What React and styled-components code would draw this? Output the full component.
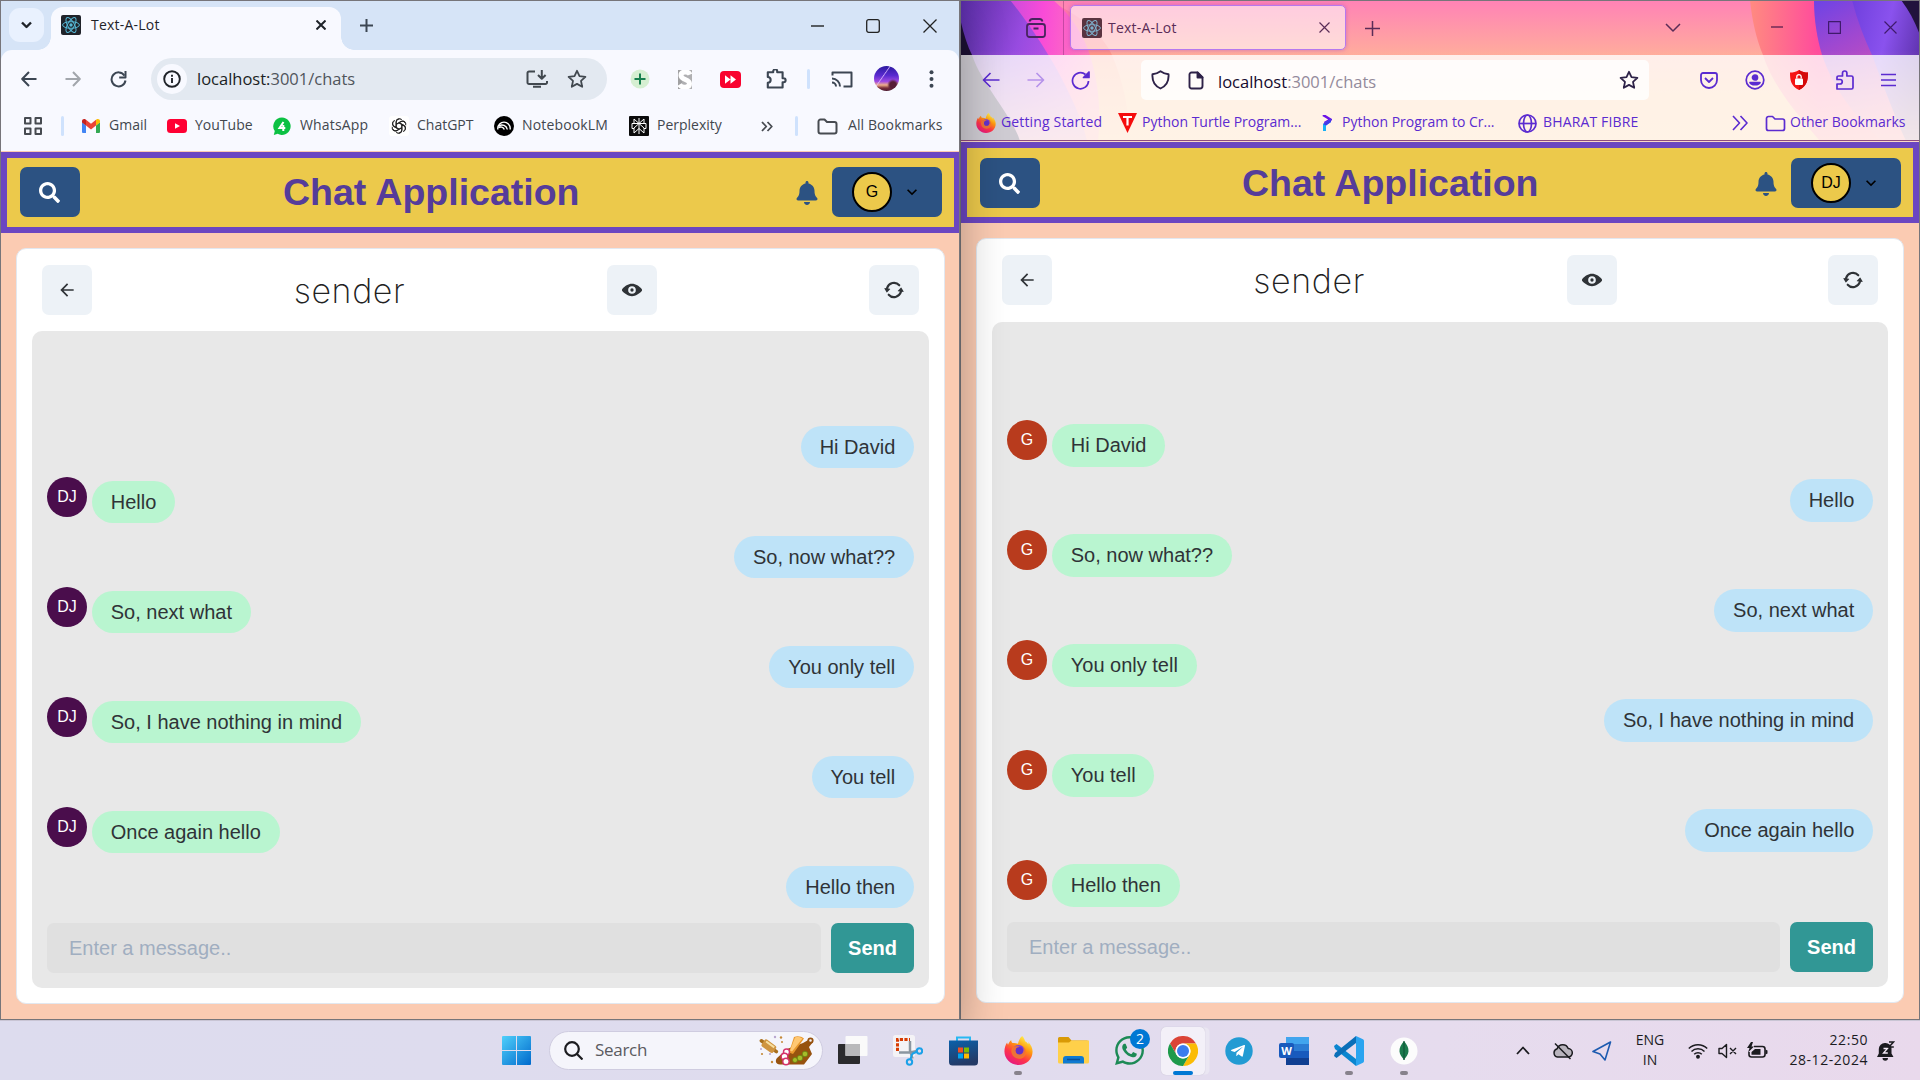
import React from "react";
import styled, { createGlobalStyle, css } from "styled-components";
import { FaSearch, FaBell, FaWhatsapp, FaTelegramPlane } from "react-icons/fa";

const UI = `"Open Sans", "Noto Sans", sans-serif`;
const ARIAL = `"Liberation Sans", Arial, sans-serif`;

const Global = createGlobalStyle`
  * { box-sizing: border-box; }
  html, body { margin: 0; padding: 0; overflow: hidden; }
  svg { display: block; flex: none; }
  button, input { font: inherit; border: 0; margin: 0; padding: 0; background: none; color: inherit; }
`;

/* ---------- shell ---------- */
const Desktop = styled.div`
  width: 1920px;
  height: 1080px;
  display: grid;
  grid-template-columns: 960px 960px;
  grid-template-rows: 1020px 60px;
  overflow: hidden;
  font-family: ${UI};
`;
const WindowFrame = styled.section`
  display: flex;
  flex-direction: column;
  border: 1px solid #77757a;
  overflow: hidden;
  background: #fbcbb2;
  ${(p) => p.$active && css`
    position: relative;
    z-index: 1;
    box-shadow: 0 18px 44px rgba(0, 0, 0, 0.3);
  `}
`;
const Slot = styled.span`
  display: flex;
  align-items: center;
  justify-content: center;
  flex: none;
  width: ${(p) => p.$w}px;
  height: ${(p) => p.$h || 20}px;
  margin-left: ${(p) => p.$ml || 0}px;
`;

/* ---------- chrome browser ---------- */
const ChromeStrip = styled.header`
  display: flex;
  height: 49px;
  background: #d6e4f7;
  padding: 6px 0 0 8px;
`;
const TabSearch = styled.button`
  display: flex;
  align-items: center;
  justify-content: center;
  width: 35px;
  height: 34px;
  margin-top: 1px;
  border-radius: 11px;
  background: #e9f1fe;
`;
const ChromeTab = styled.div`
  position: relative;
  display: flex;
  align-items: center;
  width: 290px;
  height: 43px;
  margin-left: 7px;
  padding: 0 0 7px 10px;
  border-radius: 12px 12px 0 0;
  background: #f8f9ff;
  &::before, &::after {
    content: "";
    position: absolute;
    bottom: 0;
    width: 13px;
    height: 13px;
  }
  &::before { left: -13px; background: radial-gradient(circle at 0 0, transparent 12.5px, #f8f9ff 13px); }
  &::after { right: -13px; background: radial-gradient(circle at 100% 0, transparent 12.5px, #f8f9ff 13px); }
`;
const TabTitle = styled.span`
  flex: none;
  width: ${(p) => p.$w}px;
  margin-left: ${(p) => p.$ml}px;
  font-size: 14px;
  line-height: 20px;
  letter-spacing: 0.22px;
  color: ${(p) => p.$c};
  white-space: nowrap;
`;
const ChromeBars = styled.div`
  height: 101px;
  background: #d6e4f7;
`;
const ChromeSurface = styled.div`
  height: 101px;
  border-radius: 11px 11px 0 0;
  background: #f8f9ff;
  padding-top: 8px;
`;
const Row = styled.div`
  display: flex;
  align-items: center;
  height: ${(p) => p.$h}px;
  margin-top: ${(p) => p.$mt || 0}px;
`;
const Omnibox = styled.div`
  display: flex;
  align-items: center;
  width: 456px;
  height: 42px;
  margin-left: 24px;
  padding-left: 6px;
  border-radius: 21px;
  background: #e3e9f1;
`;
const InfoDot = styled.span`
  display: flex;
  align-items: center;
  justify-content: center;
  width: 30px;
  height: 30px;
  border-radius: 50%;
  background: #f8f9ff;
`;
const Address = styled.span`
  flex: none;
  width: ${(p) => p.$w}px;
  margin-left: ${(p) => p.$ml}px;
  padding-top: ${(p) => p.$pt || 0}px;
  font-size: 16.5px;
  line-height: 24px;
  white-space: nowrap;
  color: ${(p) => p.$dim};
  b { font-weight: 400; color: ${(p) => p.$c}; }
`;
const Divider = styled.span`
  width: 3px;
  height: 20px;
  margin-left: ${(p) => p.$ml}px;
  border-radius: 2px;
  background: #cfe2fd;
`;
const Bookmark = styled.a`
  display: flex;
  align-items: center;
  flex: none;
  width: ${(p) => p.$w}px;
  height: 24px;
  margin-left: ${(p) => p.$ml || 0}px;
  gap: ${(p) => p.$gap || 8}px;
  font-size: 14px;
  line-height: 20px;
  letter-spacing: ${(p) => p.$ls || 0}px;
  white-space: nowrap;
  color: ${(p) => p.$c || "#42474e"};
`;
const BookmarkLabel = styled.span`
  padding-bottom: 2px;
`;
const Avatar25 = styled.span`
  width: 25px;
  height: 25px;
  margin: -2px 0 0 21px;
  border-radius: 50%;
  background:
    radial-gradient(circle at 76% 76%, #571c35 0 12%, transparent 22%),
    linear-gradient(125deg, transparent 36%, rgba(225, 190, 255, 0.8) 38%, transparent 41%),
    linear-gradient(180deg, #2c1aa0 0%, #5a2ad0 38%, #a04be0 62%, #f0b08a 76%, #7a2f3a 88%, #4c1b33 100%);
`;

/* ---------- firefox browser ---------- */
const FoxChrome = styled.header`
  position: relative;
  height: 141px;
  border-bottom: 1px solid #fbd9c8;
  isolation: isolate;
`;
const ThemeArt = styled.svg`
  position: absolute;
  inset: 0;
  z-index: -1;
`;
const FoxTabs = styled.div`
  display: flex;
  height: 54px;
  padding-top: 4px;
`;
const FoxTab = styled.div`
  display: flex;
  align-items: center;
  width: 276px;
  height: 45px;
  margin-left: 6px;
  padding-left: 11px;
  border: 1px solid #b678ee;
  border-radius: 5px;
  background: rgba(255, 255, 255, 0.58);
  box-shadow: 0 0 4px rgba(150, 60, 200, 0.45);
`;
const FoxRule = styled.span`
  width: 1px;
  height: 54px;
  margin: -4px 0 0 17px;
  background: rgba(60, 10, 70, 0.28);
`;
const FoxBars = styled.div`
  height: 86px;
  padding-top: 5px;
  background: rgba(255, 255, 255, 0.79);
  border-bottom: 1px solid #8d4a80;
`;
const UrlBar = styled.div`
  display: flex;
  align-items: center;
  width: 508px;
  height: 40px;
  margin-left: 51px;
  padding-left: 10px;
  border-radius: 5px;
  background: rgba(255, 255, 255, 0.8);
`;

/* ---------- chat page ---------- */
const Page = styled.main`
  flex: 1;
  display: flex;
  flex-direction: column;
  background: #fbcbb2;
  padding-top: ${(p) => p.$pt || 0}px;
  font-family: ${ARIAL};
`;
const NavBar = styled.nav`
  display: flex;
  align-items: flex-start;
  flex: none;
  height: 81px;
  padding: ${(p) => p.$pt}px 12px 0 13px;
  border: 6px solid #6b46c1;
  border-right-width: ${(p) => p.$br}px;
  background: #ecc94b;
`;
const SolidButton = styled.button`
  display: flex;
  align-items: center;
  justify-content: ${(p) => (p.$start ? "flex-start" : "center")};
  flex: none;
  width: ${(p) => p.$w}px;
  height: 50px;
  padding-left: ${(p) => p.$pl || 0}px;
  padding-right: ${(p) => p.$pr || 0}px;
  border-radius: 7px;
  color: #fff;
  background: #2c5282;
`;
const AppTitle = styled.h1`
  flex: 1;
  margin: 0;
  padding-left: ${(p) => p.$pl}px;
  font-size: 37.5px;
  line-height: 50px;
  font-weight: 700;
  white-space: nowrap;
  color: #553c9a;
`;
const BellWrap = styled.span`
  display: flex;
  align-items: center;
  height: 51px;
  margin-right: 13px;
  color: #2c5282;
`;
const Initials = styled.span`
  display: flex;
  align-items: center;
  justify-content: center;
  flex: none;
  width: 40px;
  height: 40px;
  border-radius: 50%;
  font-size: 16px;
  line-height: 20px;
  color: ${(p) => p.$c || "#fff"};
  background: ${(p) => p.$bg};
  border: ${(p) => (p.$ring ? "2px solid #000" : "0")};
`;
const Card = styled.div`
  display: flex;
  flex-direction: column;
  flex: none;
  width: ${(p) => p.$w}px;
  height: ${(p) => p.$h}px;
  margin: 15px 0 0 15px;
  padding: 0 15px 15px;
  border: 1px solid #e2e8f0;
  border-radius: 10px;
  background: #fff;
`;
const CardHeader = styled.div`
  display: flex;
  align-items: center;
  justify-content: space-between;
  height: ${(p) => p.$h}px;
  padding: 0 10px ${(p) => p.$pb}px 10px;
`;
const IconButton = styled.button`
  display: flex;
  align-items: center;
  justify-content: center;
  width: 50px;
  height: 50px;
  margin-left: ${(p) => p.$ml || 0}px;
  border-radius: 7px;
  color: #2f3337;
  background: #edf2f7;
`;
const ChatName = styled.h2`
  margin: 0;
  width: 112px;
  font-family: Inter, "Open Sans", sans-serif;
  font-size: 34px;
  line-height: 45px;
  font-weight: 250;
  letter-spacing: 0.6px;
  white-space: nowrap;
  color: #222;
`;
const ChatBox = styled.div`
  display: flex;
  flex: 1;
  flex-direction: column;
  justify-content: flex-end;
  padding: 15px;
  border-radius: 10px;
  background: #e8e8e8;
`;
const Messages = styled.div`
  display: flex;
  flex-direction: column;
  gap: ${(p) => 55 - p.$row}px;
`;
const MessageRow = styled.div`
  display: flex;
  align-items: flex-start;
  justify-content: ${(p) => (p.$mine ? "flex-end" : "flex-start")};
  gap: 5px;
  height: ${(p) => p.$row}px;
  ${Initials} { margin-top: -4px; }
`;
const Bubble = styled.span`
  padding: 0 18.75px;
  height: ${(p) => p.$row}px;
  border-radius: 25px;
  font-size: 20px;
  line-height: ${(p) => p.$row}px;
  white-space: nowrap;
  color: #2f3337;
  background: ${(p) => (p.$mine ? "#bee3f8" : "#b9f5d0")};
`;
const Composer = styled.div`
  display: flex;
  gap: 10px;
  margin-top: 15px;
`;
const MessageInput = styled.input`
  flex: 1;
  min-width: 0;
  height: 50px;
  padding: 0 22px;
  border-radius: 7px;
  font-size: 20px;
  background: #e0e0e0;
  &::placeholder { color: #a0aec0; opacity: 1; }
`;
const SendButton = styled.button`
  width: 83px;
  height: 50px;
  border-radius: 7px;
  font-size: 20px;
  font-weight: 700;
  color: #fff;
  background: #319795;
`;

/* ---------- taskbar ---------- */
const Taskbar = styled.footer`
  grid-column: 1 / 3;
  position: relative;
  z-index: 2;
  display: flex;
  align-items: center;
  padding-left: 502px;
  border-top: 1px solid #c9c5d4;
  background: linear-gradient(90deg, #dddcee 0%, #dfdcee 45%, #e6dcee 75%, #e9d9ec 100%);
`;
const TaskSearch = styled.div`
  display: flex;
  align-items: center;
  width: 274px;
  height: 39px;
  margin-left: 18px;
  padding-left: 14px;
  border: 1px solid #cfcce0;
  border-radius: 20px;
  background: #f5f5fb;
  font-size: 17px;
  color: #5a5a60;
`;
const SearchLabel = styled.span`
  width: 164px;
  margin: -2px 0 0 12px;
  letter-spacing: -0.3px;
`;
const TaskItem = styled.div`
  position: relative;
  display: flex;
  align-items: center;
  justify-content: center;
  width: 44px;
  height: 48px;
  margin-left: ${(p) => p.$ml ?? 11}px;
  border-radius: 5px;
  ${(p) => p.$on && css`
    background: #f3f0f8;
    box-shadow: 0 0 1px #b9b4c6, 5px 0 0 -0.5px #eae6f2;
  `}
`;
const Running = styled.span`
  position: absolute;
  bottom: 0;
  left: ${(p) => (p.$on ? 12 : 18)}px;
  width: ${(p) => (p.$on ? 20 : 8)}px;
  height: 4px;
  border-radius: 2px;
  background: ${(p) => (p.$on ? "#0078d4" : "#87828c")};
`;
const Badge = styled.span`
  position: absolute;
  top: 2px;
  right: 1px;
  width: 20px;
  height: 20px;
  border-radius: 50%;
  font-size: 14px;
  line-height: 20px;
  text-align: center;
  color: #fff;
  background: #0078d4;
`;
const TrayText = styled.div`
  width: ${(p) => p.$w}px;
  margin-left: ${(p) => p.$ml}px;
  margin-top: -2px;
  font-size: 14px;
  line-height: 20px;
  letter-spacing: ${(p) => p.$ls || 0}px;
  text-align: ${(p) => p.$align};
  white-space: nowrap;
  color: #1b1b1f;
`;

/* ---------- icons ---------- */
const Line = ({ w = 20, h, vb, c = "#3c4653", s = 2, children, cap = "butt" }) => (
  <svg width={w} height={h || w} viewBox={vb || `0 0 ${w} ${h || w}`} fill="none" stroke={c} strokeWidth={s} strokeLinecap={cap} strokeLinejoin="round">
    {children}
  </svg>
);
const ReactMark = ({ bg = "#20232a", c = "#56b8d6" }) => (
  <svg width="20" height="20" viewBox="0 0 20 20">
    <rect width="20" height="20" rx="2" fill={bg} />
    <g fill="none" stroke={c} strokeWidth="1">
      {[0, 60, 120].map((a) => <ellipse key={a} cx="10" cy="10" rx="8.4" ry="3.3" transform={`rotate(${a} 10 10)`} />)}
    </g>
    <circle cx="10" cy="10" r="1.7" fill={c} />
  </svg>
);
const Gmail = () => (
  <svg width="18" height="14" viewBox="0 0 18 14">
    <path d="M0 2v10.7c0 .7.5 1.3 1.2 1.3H4V6.5L0 3z" fill="#4285f4" />
    <path d="M18 2v10.7c0 .7-.5 1.3-1.2 1.3H14V6.5L18 3z" fill="#34a853" />
    <path d="M4 .8v5.7l5 3.9 5-3.9V.8L9 4.7z" fill="#ea4335" />
    <path d="M0 2v1.400l4 3.100V.8L3.200.3C1.800-.5 0 .5 0 2z" fill="#c5221f" />
    <path d="M18 2v1.400l-4 3.100V.8l.8-.5C16.200-.5 18 .5 18 2z" fill="#fbbc04" />
  </svg>
);
const YouTube = () => (
  <svg width="20" height="14" viewBox="0 0 20 14"><rect width="20" height="14" rx="3.500" fill="#ff0033" /><path d="M8 4.200v5.600L13 7z" fill="#fff" /></svg>
);
const WaFour = () => (
  <svg width="18" height="19" viewBox="0 0 18 19">
    <path d="M9 .5a8.700 8.700 0 1 1-4.300 16.300L.8 17.900l1-3.800A8.700 8.700 0 0 1 9 .5z" fill="#0cc143" />
    <path d="M10.500 5L6.500 11h5.800M10.300 8v6" fill="none" stroke="#fff" strokeWidth="2" />
  </svg>
);
const OpenAi = () => (
  <svg width="20" height="20" viewBox="-12 -12 24 24">
    <rect x="-12" y="-12" width="24" height="24" rx="4" fill="#fff" />
    <g fill="none" stroke="#222" strokeWidth="1.250">
      {[0, 60, 120, 180, 240, 300].map((a) => <path key={a} transform={`rotate(${a})`} d="M-3.400 1.900V-4.800a3.800 3.800 0 0 1 6.600-2.600M-3.400-2L2.300-5.300a3.800 3.800 0 0 1 5.200 1.400" />)}
    </g>
  </svg>
);
const Notebook = () => (
  <svg width="20" height="20" viewBox="0 0 20 20">
    <circle cx="10" cy="10" r="10" fill="#000" />
    <g fill="none" stroke="#fff" strokeWidth="1.400">
      <path d="M3.800 13.500v-1.200a6.200 6.200 0 0 1 12.400 0v1.200" />
      <path d="M5 9.800a5.500 5.500 0 0 1 8.300 3.700M4.500 11.700a3.800 3.800 0 0 1 5.800 1.800" />
    </g>
  </svg>
);
const Perplexity = () => (
  <svg width="20" height="20" viewBox="0 0 20 20">
    <rect width="20" height="20" rx="1" fill="#0b0b0b" />
    <g fill="none" stroke="#fff" strokeWidth="1">
      <path d="M10 2v16M5 3l5 4.500L15 3v4.500H5zM10 7.500L5 12v5l5-4.500 5 4.500v-5zM5 12.500H3v-5h14v5h-2" />
    </g>
  </svg>
);
const Folder = ({ c, s = 2 }) => <Line w={21} h={17} c={c} s={s}><path d="M1.500 3.500a2 2 0 0 1 2-2h4l2.500 2.500h7.500a2 2 0 0 1 2 2v7.500a2 2 0 0 1-2 2h-14a2 2 0 0 1-2-2z" /></Line>;
const Cross = ({ w = 13, c, s = 1.200 }) => <Line w={w} c={c} s={s}><path d={`M.5.5l${w - 1} ${w - 1}M${w - 0.5}.5l-${w - 1} ${w - 1}`} /></Line>;
const Plus = ({ w = 14, c, s = 2 }) => <Line w={w} c={c} s={s}><path d={`M${w / 2} 0v${w}M0 ${w / 2}h${w}`} /></Line>;
const Star = ({ c, w = 20, s = 1.800 }) => <Line w={w} vb="0 0 20 20" c={c} s={s}><path d="M10 1.800l2.500 5.400 5.900.7-4.400 4 1.200 5.900-5.200-2.900-5.200 2.900L6 11.900l-4.400-4 5.900-.7z" /></Line>;

const FirefoxLogo = ({ w = 20, id }) => (
  <svg width={w} height={w} viewBox="0 0 28 28">
    <defs>
      <linearGradient id={id} x1=".8" y1=".05" x2=".25" y2="1">
        <stop offset="0" stopColor="#fff44f" /><stop offset=".35" stopColor="#ff980e" /><stop offset=".65" stopColor="#ff3647" /><stop offset="1" stopColor="#e31587" />
      </linearGradient>
    </defs>
    <path d="M17.500 0c1.800 1.700 2.500 3.400 2.800 5 1.200.5 2.500 1.700 3.200 3 .2-.9.100-1.500 0-2.200 2.500 2.700 4.100 6 4.100 9.200C27.600 22.500 21.500 28 14 28S.4 22.300.4 14.800c0-3.300 1.100-6.500 2.600-8.600.2 1 .4 1.700.9 2.200C4.500 6.500 5.500 5 7 4c.1 1.300.4 2.200 1.200 2.800 1.800-.2 3.800 0 5.300.8.700-3 1.800-5.700 4-7.600z" fill={`url(#${id})`} />
    <circle cx="14.200" cy="15" r="6.300" fill="#7a3be0" />
    <path d="M8 11.500c1.500-1.700 4-2 6-1.500 1.300.4 1.600 1.300.5 2.100-1.300.8-2.700.8-3 2-.3 2 2 3.700 4.300 3.200 3.500-.7 4-4.500 2.200-7.300 4 2 4.500 7.500 1 10.500-4 3.200-10 1-11.500-3.500-.7-2-.5-4 .5-5.500z" fill="#ff7b1c" opacity=".85" />
    <circle cx="14.800" cy="14.200" r="3.600" fill="#6331c9" />
  </svg>
);
const ChromeLogo = () => (
  <svg width="30" height="30" viewBox="-45 -45 90 90">
    {[["#db4437", 0], ["#fbbc05", 120], ["#1e9a4b", 240]].map(([c, a]) => (
      <path key={a} fill={c} transform={`rotate(${a})`} d="M0-22.500H39A45 45 0 0 0-39-22.500L-19.500 11.250A22.500 22.500 0 0 1 0-22.500z" />
    ))}
    <circle r="22.500" fill="#fff" /><circle r="18" fill="#3b7ded" />
  </svg>
);
const WinLogo = () => (
  <svg width="29" height="29" viewBox="0 0 29 29">
    <defs><linearGradient id="win" x1="0" y1="0" x2="1" y2="1"><stop offset="0" stopColor="#4fd0fb" /><stop offset="1" stopColor="#0069cc" /></linearGradient></defs>
    <path fill="url(#win)" d="M1 0h13v14H0V1a1 1 0 0 1 1-1zM15 0h13a1 1 0 0 1 1 1v13H15zM0 15h14v14H1a1 1 0 0 1-1-1zM15 15h14v13a1 1 0 0 1-1 1H15z" />
  </svg>
);
const Feast = () => (
  <svg width="56" height="31" viewBox="0 0 56 31">
    <g transform="rotate(36 10 11)"><rect x="-1" y="9.500" width="22" height="3.500" rx="1.700" fill="#a8701e" /><rect x="3" y="7" width="14" height="8.500" rx="2" fill="#cf9440" /><path d="M5 9h10" stroke="#f7dfa0" strokeWidth="2" /></g>
    <path d="M44 8l7-4 3 3-4 5 3 7-8 10.500H21c-4.500 0-5-4-3-6.500l10-9z" fill="#97530f" />
    <circle cx="51.500" cy="5.500" r="2.200" fill="#f5f5fb" stroke="#97530f" strokeWidth="1.800" />
    <path d="M35 2c4-1.500 7-.5 10 1.500L34 19l-4-1.500z" fill="#e9982c" /><path d="M36 2.500c3.500-1 5.500 0 7.500 1L33 16.500l-2-1z" fill="#ffc873" />
    <g fill="#fff" stroke="#d6336c" strokeWidth="1.400"><circle cx="27.500" cy="17" r="3" /><circle cx="25.500" cy="21.500" r="3.300" /><circle cx="27" cy="26.500" r="3.200" /></g>
    <g fill="#a5bd2a" stroke="#6a7d10" strokeWidth=".8"><circle cx="36" cy="25" r="2.500" /><circle cx="41" cy="23" r="2.800" /><circle cx="46" cy="19" r="2.800" /></g>
    <g fill="#c58a3a"><circle cx="22" cy="2.500" r="1.200" /><circle cx="23" cy="7" r="1" /><circle cx="3" cy="19" r="1.100" /><circle cx="13" cy="27" r="1.200" /></g>
    <g fill="#b9a6cf"><circle cx="16" cy="2" r="1.200" /><circle cx="2" cy="14" r="1" /><circle cx="11" cy="19" r="1.100" /></g>
  </svg>
);
const TaskView = () => (
  <svg width="30" height="29" viewBox="0 0 30 29"><rect x="0" y="8" width="22" height="20" rx="1" fill="#2b2b2d" /><rect x="7.500" width="22" height="20" rx="1" fill="#fafafa" /><path d="M7.500 8H22v12H7.500z" fill="#b9b9bb" /></svg>
);
const Snip = () => (
  <svg width="30" height="31" viewBox="0 0 30 31">
    <rect width="22" height="22" rx="2.500" fill="#f4f3f6" />
    <path d="M4.500 16V4.500H17" fill="none" stroke="#d83b01" strokeWidth="3" strokeDasharray="3.200 1.400" />
    <path d="M17 6v9.500l2.500 8M6 17.500h11l7-1.500" fill="none" stroke="#8b96a0" strokeWidth="2.500" />
    <g fill="none" stroke="#1ba1e8" strokeWidth="2"><circle cx="26.500" cy="16" r="2.700" /><circle cx="16.500" cy="27" r="2.700" /><path d="M19 19l5-2.500M17.500 24.500L19 19" /></g>
  </svg>
);
const Store = () => (
  <svg width="29" height="30" viewBox="0 0 29 30">
    <path d="M8 6V1.500h13V6" fill="none" stroke="#28b8f2" strokeWidth="2" />
    <defs><linearGradient id="st" x1="0" y1="0" x2=".3" y2="1"><stop offset="0" stopColor="#0a61ab" /><stop offset="1" stopColor="#243a66" /></linearGradient></defs>
    <path d="M0 4.500h29V26a3.500 3.500 0 0 1-3.500 3.500h-22A3.500 3.500 0 0 1 0 26z" fill="url(#st)" />
    <path fill="#f25022" d="M9 11.500h5v5H9z" /><path fill="#7fba00" d="M15 11.500h5v5h-5z" /><path fill="#00a4ef" d="M9 17.500h5v5H9z" /><path fill="#ffb900" d="M15 17.500h5v5h-5z" />
  </svg>
);
const Explorer = () => (
  <svg width="31" height="27" viewBox="0 0 31 27">
    <path d="M1.500 0h9l3 3.500H29a1.500 1.500 0 0 1 1.500 1.500v6H0V1.500A1.500 1.500 0 0 1 1.500 0z" fill="#d99a06" />
    <path d="M0 5.500h11l2.500-2H31V25a1.500 1.500 0 0 1-1.500 1.500h-28A1.500 1.500 0 0 1 0 25z" fill="#ffd04a" />
    <path d="M5 26.500V22a3 3 0 0 1 3-3h15a3 3 0 0 1 3 3v4.500z" fill="#0f7ad1" /><path d="M9 22.500h13" stroke="#0a4f96" strokeWidth="1.500" />
  </svg>
);
const Telegram = () => (
  <svg width="28" height="28" viewBox="0 0 28 28"><circle cx="14" cy="14" r="13.700" fill="#229bd3" /><FaTelegramPlane x="5" y="6" size={16} color="#fff" /></svg>
);
const WordMark = styled.span`
  position: relative;
  display: flex;
  flex-direction: column;
  width: 30px;
  height: 28px;
  padding-left: 7px;
`;
const WordBand = styled.i`
  flex: 1;
  background: ${(p) => p.$c};
`;
const WordLetter = styled.b`
  position: absolute;
  left: 0;
  top: 6px;
  width: 15px;
  height: 15px;
  border-radius: 2px;
  background: #185abd;
  color: #fff;
  font: 700 11px/15px "Open Sans", sans-serif;
  text-align: center;
`;
const VsCode = () => (
  <svg width="30" height="30" viewBox="0 0 30 30">
    <path d="M0 10l2.500-2L22 23v7L1 13z" fill="#0b86d0" /><path d="M0 20l2.500 2L22 7V0L1 17z" fill="#0a6fb8" />
    <path d="M22 0l7 3.200a2 2 0 0 1 1 1.700v20.200a2 2 0 0 1-1 1.700L22 30z" fill="#2aa4f0" />
  </svg>
);
const Mongo = () => (
  <svg width="28" height="28" viewBox="0 0 28 28"><circle cx="14" cy="14" r="13.500" fill="#fcfcfc" /><path d="M14 4c3 4 4.800 6.500 4.500 10.500-.3 3.500-2.500 5.500-4 7.500v1h-1v-1c-1.500-2-3.800-4-4-7.500C9.200 10.500 11 8 14 4z" fill="#1b7a4d" /><path d="M14 4v19" stroke="#0c4f34" /></svg>
);

/* ---------- chat client ---------- */
const ViewIcon = () => (
  <svg width="20" height="20" viewBox="0 0 24 24" fill="currentColor">
    <path d="M23.432,10.524C20.787,7.614,16.4,4.538,12,4.6,7.6,4.537,3.213,7.615.568,10.524a2.211,2.211,0,0,0,0,2.948C3.182,16.351,7.507,19.4,11.839,19.4h.308c4.347,0,8.671-3.049,11.288-5.929A2.21,2.21,0,0,0,23.432,10.524ZM7.4,12A4.6,4.6,0,1,1,12,16.6,4.6,4.6,0,0,1,7.4,12Z" />
    <circle cx="12" cy="12" r="2" />
  </svg>
);
const RepeatIcon = () => (
  <svg width="20" height="20" viewBox="0 0 24 24" fill="currentColor">
    <path d="M10.319,4.936a7.239,7.239,0,0,1,7.1,2.252,1.25,1.25,0,1,0,1.872-1.657A9.737,9.737,0,0,0,9.743,2.5,10.269,10.269,0,0,0,2.378,9.61a.249.249,0,0,1-.271.178l-1.033-.13A.491.491,0,0,0,.6,9.877a.5.5,0,0,0-.019.526l2.476,4.342a.5.5,0,0,0,.373.248.43.43,0,0,0,.062,0,.5.5,0,0,0,.359-.152l3.477-3.593a.5.5,0,0,0-.3-.844L5.15,10.172a.25.25,0,0,1-.2-.333A7.7,7.7,0,0,1,10.319,4.936Z" />
    <path d="M23.406,14.1a.5.5,0,0,0,.015-.526l-2.5-4.329A.5.5,0,0,0,20.546,9a.489.489,0,0,0-.421.151l-3.456,3.614a.5.5,0,0,0,.3.842l1.848.221a.249.249,0,0,1,.183.117.253.253,0,0,1,.023.216,7.688,7.688,0,0,1-5.369,4.9,7.243,7.243,0,0,1-7.1-2.253,1.25,1.25,0,1,0-1.872,1.656,9.74,9.74,0,0,0,9.549,3.03,10.261,10.261,0,0,0,7.369-7.12.251.251,0,0,1,.27-.179l1.058.127a.422.422,0,0,0,.06,0A.5.5,0,0,0,23.406,14.1Z" />
  </svg>
);
const CONVERSATION = [
  ["G", "Hi David"], ["DJ", "Hello"], ["G", "So, now what??"], ["DJ", "So, next what"], ["G", "You only tell"],
  ["DJ", "So, I have nothing in mind"], ["G", "You tell"], ["DJ", "Once again hello"], ["G", "Hello then"],
];
function ChatApp({ me, peerColor, layout }) {
  return (
    <Page $pt={layout.top}>
      <NavBar $pt={layout.navPad} $br={layout.navRight}>
        <SolidButton $w={60} $pr={1}><FaSearch size={21} /></SolidButton>
        <AppTitle $pl={layout.titlePl}>Chat Application</AppTitle>
        <BellWrap><FaBell size={24} /></BellWrap>
        <SolidButton $w={110} $start $pl={20}>
          <Initials $bg="#ecc94b" $c="#000" $ring>{me}</Initials>
          <Slot $w={20} $ml={10}><svg width="20" height="20" viewBox="0 0 24 24"><path d="M16.590 8.590L12 13.170 7.410 8.590 6 10l6 6 6-6z" fill="#000" /></svg></Slot>
        </SolidButton>
      </NavBar>
      <Card $w={layout.cardW} $h={layout.cardH}>
        <CardHeader $h={layout.headH} $pb={layout.headPb}>
          <IconButton><svg width="20" height="20" viewBox="0 0 24 24"><path d="M20 11H7.830l5.590-5.590L12 4l-8 8 8 8 1.410-1.410L7.830 13H20v-2z" fill="currentColor" /></svg></IconButton>
          <ChatName>sender</ChatName>
          <IconButton><ViewIcon /></IconButton>
          <IconButton $ml={10}><RepeatIcon /></IconButton>
        </CardHeader>
        <ChatBox>
          <Messages $row={layout.row}>
            {CONVERSATION.map(([who, text]) => (
              <MessageRow key={text} $mine={who === me} $row={layout.row}>
                {who !== me && <Initials $bg={peerColor}>{who}</Initials>}
                <Bubble $mine={who === me} $row={layout.row}>{text}</Bubble>
              </MessageRow>
            ))}
          </Messages>
          <Composer>
            <MessageInput placeholder="Enter a message.." />
            <SendButton>Send</SendButton>
          </Composer>
        </ChatBox>
      </Card>
    </Page>
  );
}

/* ---------- windows ---------- */
function ChromeWindow() {
  return (
    <WindowFrame $active>
      <ChromeStrip>
        <TabSearch><Line w={11} h={8} s={2.400} c="#1f2329"><path d="M1 1.500l4.500 4.500L10 1.500" /></Line></TabSearch>
        <ChromeTab>
          <ReactMark />
          <TabTitle $ml={10} $w={225} $c="#1f2329">Text-A-Lot</TabTitle>
          <Cross w={10} s={2} c="#1f2329" />
        </ChromeTab>
        <Slot $w={14} $h={36} $ml={18}><Plus w={13} /></Slot>
        <Slot $w={14} $h={38} $ml={438}><Line w={14} h={2} s={1.300} c="#111"><path d="M0 1h13" /></Line></Slot>
        <Slot $w={14} $h={38} $ml={41}><Line w={14} s={1.300} c="#222"><rect x=".7" y=".7" width="12.600" height="12.600" rx="2" /></Line></Slot>
        <Slot $w={14} $h={38} $ml={43}><Cross w={14} c="#222" s={1.300} /></Slot>
      </ChromeStrip>
      <ChromeBars>
        <ChromeSurface>
          <Row $h={42}>
            <Slot $w={16} $ml={20}><Line w={16} ><path d="M15.500 8H1.500M8 1L1.200 8 8 15" /></Line></Slot>
            <Slot $w={16} $ml={28}><Line w={16} c="#a2a6ac"><path d="M.5 8h14M8 1l6.800 7L8 15" /></Line></Slot>
            <Slot $w={17} $ml={29}><Line w={17} h={17}><path d="M14.500 4.600A7 7 0 1 0 15.500 9.500" /><path d="M15.500 0v6.500H9.200" /></Line></Slot>
            <Omnibox>
              <InfoDot><Line w={18} s={1.900} c="#1f2329"><circle cx="9" cy="9" r="7.800" /><path d="M9 8v5M9 4.800v2" /></Line></InfoDot>
              <Address $ml={10} $w={329} $c="#1b1f24" $dim="#50555c"><b>localhost:</b>3001/chats</Address>
              <Line w={22} h={18} c="#41484f"><path d="M9 1.500H3a1.500 1.500 0 0 0-1.500 1.500v9.500A1.500 1.500 0 0 0 3 14h16.500a1.500 1.500 0 0 0 1.500-1.500V11M15.800 0v8M12 5l3.800 3.800L19.600 5M7 16.800h8" /></Line>
              <Slot $w={20} $ml={19}><Star c="#41484f" /></Slot>
            </Omnibox>
            <Slot $w={20} $ml={23}><svg width="20" height="20" viewBox="0 0 20 20"><circle cx="10" cy="10" r="9.500" fill="#d5efd2" /><path d="M10 4.500v11M4.500 10h11" stroke="#17804f" strokeWidth="2" /></svg></Slot>
            <Slot $w={14} $ml={28}><svg width="14" height="19" viewBox="0 0 14 19"><path d="M0 0h4v19H0z" fill="#a0a0a2" /><path d="M4 0h10v19H4z" fill="#b0b0b2" /><path d="M12 4.500C10.500 1 3 1 3 5.500s8.500 3.500 8.500 8-7.500 5-10 1" fill="none" stroke="#fff" strokeWidth="5" /></svg></Slot>
            <Slot $w={21} $ml={28}><svg width="21" height="17" viewBox="0 0 21 17"><rect width="21" height="17" rx="4" fill="#f9032f" /><path d="M5 4.200v8.600l5.500-4.300zM10.500 4.200v8.600L16 8.500z" fill="#fff" /></svg></Slot>
            <Slot $w={21} $ml={25}><Line w={21} h={20} s={2.100}><path d="M1.800 3.300h5.400v-1a2 2 0 0 1 4 0v1h5.400v6h1a2 2 0 0 1 0 4h-1v5.200H1.800v-4.700c3.800-.3 3.800-5.500 0-5.800z" /></Line></Slot>
            <Divider $ml={20} />
            <Slot $w={22} $ml={21}><Line w={22} h={17}><path d="M1.500 4.500v-3h19V15.500h-8M1 7.500a8 8 0 0 1 8 8M1 11.500a4 4 0 0 1 4 4" /></Line></Slot>
            <Avatar25 />
            <Slot $w={5} $ml={30}><svg width="5" height="18" viewBox="0 0 5 18" fill="#3c4653"><circle cx="2.500" cy="2.200" r="2" /><circle cx="2.500" cy="9" r="2" /><circle cx="2.500" cy="15.800" r="2" /></svg></Slot>
          </Row>
          <Row $h={24} $mt={14}>
            <Slot $w={18} $ml={23}><Line w={18} c="#474b51"><path d="M1 1h5.500v5.500H1zM11.500 1H17v5.500h-5.500zM1 11.500h5.500V17H1zM11.500 11.500H17V17h-5.500z" /></Line></Slot>
            <Divider $ml={19} />
            <Bookmark $w={85} $ml={18} $gap={9}><Gmail /><BookmarkLabel>Gmail</BookmarkLabel></Bookmark>
            <Bookmark $w={106}><YouTube /><BookmarkLabel>YouTube</BookmarkLabel></Bookmark>
            <Bookmark $w={116} $gap={9} $ls={0.15}><WaFour /><BookmarkLabel>WhatsApp</BookmarkLabel></Bookmark>
            <Bookmark $w={105}><OpenAi /><BookmarkLabel>ChatGPT</BookmarkLabel></Bookmark>
            <Bookmark $w={135} $ls={0.15}><Notebook /><BookmarkLabel>NotebookLM</BookmarkLabel></Bookmark>
            <Bookmark $w={132}><Perplexity /><BookmarkLabel>Perplexity</BookmarkLabel></Bookmark>
            <Line w={12} h={11} c="#474b51" s={1.800}><path d="M1 1l4.300 4.500L1 10M6.500 1l4.300 4.500L6.500 10" /></Line>
            <Divider $ml={22} />
            <Bookmark $w={130} $ml={19} $gap={10} $ls={0.1}><Folder c="#474b51" /><BookmarkLabel>All Bookmarks</BookmarkLabel></Bookmark>
          </Row>
        </ChromeSurface>
      </ChromeBars>
      <ChatApp me="G" peerColor="#4a0d4c" layout={{ top: 1, navPad: 9, navRight: 5, titlePl: 203, cardW: 929, cardH: 756, headH: 82, headPb: 0, row: 42 }} />
    </WindowFrame>
  );
}

const V = "#5b2bd0";
const N = "#2e2248";
function FirefoxWindow() {
  return (
    <WindowFrame>
      <FoxChrome>
        <ThemeArt width="958" height="140" viewBox="1 1 958 140" preserveAspectRatio="none">
          <defs>
            <linearGradient id="sky" x1="0" y1="0" x2="0" y2="1"><stop offset="0" stopColor="#ff82b6" /><stop offset=".38" stopColor="#ffab9d" /><stop offset=".7" stopColor="#ffc08a" /><stop offset="1" stopColor="#ffc488" /></linearGradient>
            <linearGradient id="lp" x1="0" y1="0" x2="1" y2=".4"><stop offset="0" stopColor="#4a2494" /><stop offset=".5" stopColor="#864be2" /><stop offset="1" stopColor="#b65cf0" /></linearGradient>
            <linearGradient id="lm" x1="0" y1="0" x2="1" y2=".1"><stop offset="0" stopColor="#8a4ce0" /><stop offset=".6" stopColor="#f94bd8" /><stop offset="1" stopColor="#ff7fb4" /></linearGradient>
            <linearGradient id="lo" x1="0" y1="0" x2="0" y2="1"><stop offset="0" stopColor="#ff6fb0" /><stop offset=".45" stopColor="#ff9c80" /><stop offset="1" stopColor="#ffba88" /></linearGradient>
            <linearGradient id="ro" x1="0" y1="0" x2="1" y2="0"><stop offset="0" stopColor="#ff8b80" /><stop offset=".4" stopColor="#ff4b9c" /><stop offset="1" stopColor="#ff5aa0" /></linearGradient>
            <linearGradient id="rp" x1="0" y1="0" x2=".4" y2="1"><stop offset="0" stopColor="#6c43e6" /><stop offset=".35" stopColor="#a048d0" /><stop offset="1" stopColor="#f05aa8" /></linearGradient>
            <linearGradient id="rq" x1="0" y1="0" x2="1" y2=".5"><stop offset="0" stopColor="#6f3fdd" /><stop offset=".5" stopColor="#8a52ee" /><stop offset="1" stopColor="#5b30a8" /></linearGradient>
            <linearGradient id="glow" x1="0" y1="0" x2="0" y2="1"><stop offset="0" stopColor="#ffc488" stopOpacity="0" /><stop offset="1" stopColor="#ffc488" stopOpacity=".6" /></linearGradient>
          </defs>
          <path d="M0 0h960v141H0z" fill="url(#sky)" />
          <path d="M85 0C125 15 145 40 152 55c12 28 18 60 17 86H80z" fill="url(#lo)" />
          <path d="M0 0h93c18 14 32 38 37 55 9 30 11 56 8 86H0z" fill="url(#lm)" />
          <path d="M0 0h50c18 22 40 55 55 85 10 20 18 38 22 56H0z" fill="url(#lp)" opacity=".8" />
          <path d="M790 0c2 20 6 38 13 55 9 30 35 60 57 86h100V0z" fill="url(#ro)" />
          <path d="M854 0c0 20 3 38 8 55 12 35 35 65 60 86h38V0z" fill="url(#rp)" />
          <path d="M892 0c5 20 12 38 20 55 12 32 22 60 34 86h14V0z" fill="url(#rq)" />
          <path d="M0 50h960v91H0z" fill="url(#glow)" />
          <path d="M0 18c3 14 7 27 12 37 10 30 40 60 48 86H0z" fill="#1c1033" />
          <path d="M941 0c8 10 14 22 19 35V0z" fill="#21123d" />
        </ThemeArt>
        <FoxTabs>
          <Slot $w={20} $h={46} $ml={65}><Line w={20} h={20} c="#47245e" s={1.800}><rect x="1" y="6" width="18" height="13" rx="2.500" /><path d="M3.500 3.500C4 1.500 5 1 6.500 1h7c1.500 0 2.500.5 3 2.500M7.500 10.500h5" /></Line></Slot>
          <FoxRule />
          <FoxTab>
            <ReactMark bg="#5a3340" c="#7fb0cc" />
            <TabTitle $ml={6} $w={211} $c="#5a2c57">Text-A-Lot</TabTitle>
            <Cross w={11} c="#5a2c57" />
          </FoxTab>
          <Slot $w={15} $h={47} $ml={19}><Plus w={15} s={1.500} c="#5a2c57" /></Slot>
          <Slot $w={16} $h={45} $ml={285}><Line w={16} h={9} s={1.500} c="#5a2c57"><path d="M1 1l7 7 7-7" /></Line></Slot>
          <Slot $w={13} $h={43} $ml={90}><Line w={13} h={2} s={1.300} c="#5a1f4e"><path d="M0 1h12" /></Line></Slot>
          <Slot $w={13} $h={45} $ml={44}><Line w={13} s={1.200} c="#3f1a6c"><path d="M.6.600h11.800v11.800H.600z" /></Line></Slot>
          <Slot $w={13} $h={45} $ml={43}><Cross w={13} c="#3f1a6c" /></Slot>
        </FoxTabs>
        <FoxBars>
          <Row $h={40}>
            <Slot $w={18} $ml={21}><Line w={18} s={1.700} c={V}><path d="M17.500 9H1.500M8.500 2L1.500 9l7 7" /></Line></Slot>
            <Slot $w={18} $ml={27}><Line w={18} s={1.700} c="#b693ea"><path d="M.5 9h16M9.500 2l7 7-7 7" /></Line></Slot>
            <Slot $w={19} $ml={26}><Line w={19} s={1.700} c={V}><path d="M17.500 10A8 8 0 1 1 14.500 3.500" /><path d="M18 1v5.500h-5.500z" fill={V} /></Line></Slot>
            <UrlBar>
              <Line w={19} h={20} s={1.900} c={N}><path d="M9.500 1.200C12 3 15 4 17.500 4.200c.5 6-1.500 11.500-8 14.300C3 15.700 1 10.200 1.500 4.200 4 4 7 3 9.500 1.200z" /></Line>
              <Slot $w={16} $ml={18}><Line w={16} h={19} s={1.900} c={N}><path d="M3.500 1.500h6l5 5v8.500a2.500 2.500 0 0 1-2.500 2.500H3.500A2 2 0 0 1 1.500 15.500v-12a2 2 0 0 1 2-2z" /><path d="M9.500 1.500v5h5z" fill={N} /></Line></Slot>
              <Address $ml={14} $w={401} $pt={3} $c="#150a2e" $dim="#938a9b"><b>localhost</b>:3001/chats</Address>
              <Star c={N} />
            </UrlBar>
            <Slot $w={18} $ml={51}><Line w={18} h={17} s={1.800} c={V}><path d="M3 1h12a2 2 0 0 1 2 2v5a8 8 0 0 1-16 0V3a2 2 0 0 1 2-2z" /><path d="M5 6l4 4 4-4" /></Line></Slot>
            <Slot $w={20} $ml={27}><Line w={20} s={1.700} c={V}><circle cx="10" cy="10" r="8.800" /><circle cx="10" cy="7.500" r="2.500" fill={V} /><path d="M5 12.500h10c-1 3-9 3-10 0z" fill={V} /></Line></Slot>
            <Slot $w={18} $ml={25}><svg width="18" height="20" viewBox="0 0 18 20"><path d="M9 0c3 2 6 2.500 9 2.500 0 8-1 13.500-9 17.500C1 16 0 10.500 0 2.500 3 2.500 6 2 9 0z" fill="#f51414" /><path d="M9 0c3 2 6 2.500 9 2.500 0 8-1 13.500-9 17.500z" fill="#d40b0b" /><rect x="5" y="8.500" width="8" height="6.500" rx="1" fill="#fff" /><path d="M6.800 8.500V6.800a2.200 2.200 0 0 1 4.400 0v1.700" fill="none" stroke="#fff" strokeWidth="1.300" /></svg></Slot>
            <Slot $w={18} $ml={28}><Line w={18} h={20} s={1.700} c={V}><path d="M1 19V14h3a1.800 1.800 0 0 0 0-4.500H1V7.500a1.500 1.500 0 0 1 1.500-1.500H6.500V3.200a2.200 2.200 0 0 1 4.400 0V6h4.500A1.600 1.600 0 0 1 17 7.500v10A1.500 1.500 0 0 1 15.500 19z" /></Line></Slot>
            <Slot $w={15} $ml={27}><Line w={15} h={14} s={1.600} c={V}><path d="M0 1.500h15M0 7h15M0 12.500h15" /></Line></Slot>
          </Row>
          <Row $h={24} $mt={11}>
            <Bookmark $c={V} $w={142} $ml={15} $gap={5} $ls={0.15}><FirefoxLogo w={20} id="fx1" /><BookmarkLabel>Getting Started</BookmarkLabel></Bookmark>
            <Bookmark $c={V} $w={204} $gap={5}>
              <svg width="19" height="20" viewBox="0 0 19 20"><path d="M0 0h19L9.500 20z" fill="#f50d0d" /><path d="M5 4h9M9.500 4v8.500" stroke="#fff" strokeWidth="2.200" /></svg>
              <BookmarkLabel>Python Turtle Program...</BookmarkLabel>
            </Bookmark>
            <Bookmark $c={V} $w={196} $gap={10}>
              <svg width="10" height="16" viewBox="0 0 10 16"><path d="M1 0l7.500 4.500-6 3.500" fill="none" stroke="#6b12e8" strokeWidth="2.600" /><path d="M9 4v3L4 10.500V16H1V9z" fill="#16b0f5" /><path d="M9 4v3L4 10.500 1 9z" fill="#4338e8" /></svg>
              <BookmarkLabel>Python Program to Cr...</BookmarkLabel>
            </Bookmark>
            <Bookmark $c={V} $w={214} $gap={6} $ls={0.15}>
              <Line w={19} s={1.700} c={V}><circle cx="9.500" cy="9.500" r="8.500" /><ellipse cx="9.500" cy="9.500" rx="4" ry="8.500" /><path d="M1 9.500h17" /></Line>
              <BookmarkLabel>BHARAT FIBRE</BookmarkLabel>
            </Bookmark>
            <Line w={16} h={16} s={1.600} c={V}><path d="M1 1l6.500 7L1 15M8.500 1L15 8l-6.500 7" /></Line>
            <Bookmark $c={V} $w={140} $ml={17} $gap={4}><Folder c={V} s={1.700} /><BookmarkLabel>Other Bookmarks</BookmarkLabel></Bookmark>
          </Row>
        </FoxBars>
      </FoxChrome>
      <ChatApp me="DJ" peerColor="#b83b1d" layout={{ top: 0, navPad: 10, navRight: 6, titlePl: 202, cardW: 928, cardH: 765, headH: 83, headPb: 1, row: 43 }} />
    </WindowFrame>
  );
}

const T = "#1b1b1f";
function TaskbarRow() {
  return (
    <Taskbar>
      <WinLogo />
      <TaskSearch>
        <Line w={19} s={2.200} c={T}><circle cx="8" cy="8" r="6.800" /><path d="M13 13l5.500 5.500" /></Line>
        <SearchLabel>Search</SearchLabel>
        <Feast />
      </TaskSearch>
      <TaskItem $ml={8}><TaskView /></TaskItem>
      <TaskItem><Snip /></TaskItem>
      <TaskItem><Store /></TaskItem>
      <TaskItem><FirefoxLogo w={29} id="fx2" /><Running /></TaskItem>
      <TaskItem><Explorer /></TaskItem>
      <TaskItem $ml={12}><FaWhatsapp size={33} color="#1c8a55" /><Badge>2</Badge></TaskItem>
      <TaskItem $on $ml={10}><ChromeLogo /><Running $on /></TaskItem>
      <TaskItem $ml={12}><Telegram /></TaskItem>
      <TaskItem>
        <WordMark><WordBand $c="#41a5ee" /><WordBand $c="#2b7cd3" /><WordBand $c="#185abd" /><WordBand $c="#103f91" /><WordLetter>W</WordLetter></WordMark>
      </TaskItem>
      <TaskItem><VsCode /><Running /></TaskItem>
      <TaskItem><Mongo /><Running /></TaskItem>
      <Slot $w={14} $ml={90}><Line w={14} h={9} s={1.800} c={T}><path d="M1 8l6-6.500L13 8" /></Line></Slot>
      <Slot $w={21} $ml={22}><Line w={21} h={18} s={1.500} c={T}><path d="M5.500 15a4.200 4.200 0 0 1-.3-8.200 5.800 5.800 0 0 1 11-.2A4.200 4.200 0 0 1 16 15z" fill="#b9b4bd" /><path d="M3 1.500l15.500 15.500" /></Line></Slot>
      <Slot $w={20} $ml={19}><Line w={20} s={1.600} c="#1d5bb0"><path d="M18.500 1L1 10.500l7 2.500 5 6z" /></Line></Slot>
      <TrayText $w={36} $ml={20} $align="center">ENG<br />IN</TrayText>
      <Slot $w={20} $ml={20}><Line w={20} h={16} s={1.500} c={T}><path d="M.8 5.500a13 13 0 0 1 18.400 0M3.500 8.500a9.200 9.200 0 0 1 13 0M6.200 11.200a5.400 5.400 0 0 1 7.600 0" /><circle cx="10" cy="13.800" r="1.200" fill={T} /></Line></Slot>
      <Slot $w={20} $ml={10}><Line w={20} h={16} s={1.400} c={T}><path d="M1 5.500h3L8.500 1.500v13L4 10.500H1zM12 5l6 6M18 5l-6 6" /></Line></Slot>
      <Slot $w={21} $ml={9}><svg width="21" height="18" viewBox="0 0 21 18"><path d="M7 4.500h8.500a2.500 2.500 0 0 1 2.500 2.500v5.500a2.500 2.500 0 0 1-2.500 2.500h-11A2.500 2.500 0 0 1 2 12.500V10" fill="none" stroke={T} strokeWidth="1.600" /><path d="M8 7h5.500v5.800H4.500V10zM18.500 7.500l2 1v3l-2 1zM4 0L0 6h2.500L1 10.500 7 4.500H4.500L6 0z" fill={T} /></svg></Slot>
      <TrayText $w={90} $ml={10} $ls={0.55} $align="right">22:50<br />28-12-2024</TrayText>
      <Slot $w={18} $ml={9}><svg width="18" height="20" viewBox="0 0 18 20"><path d="M8 2a6 6 0 0 1 6.500 6v4.500L16.500 16H0l1.800-3.500V8A6 6 0 0 1 8 2zM5.500 17h5.500a2.700 2.700 0 0 1-5.500 0z" fill={T} /><path d="M6.500 7.500h4l-4 4.500h4.300" fill="none" stroke="#f4eaf6" strokeWidth="1.300" /><path d="M12 1h4.500L12 6h4.800" fill="none" stroke={T} strokeWidth="1.500" /></svg></Slot>
    </Taskbar>
  );
}

export default function App() {
  return (
    <>
      <Global />
      <Desktop>
        <ChromeWindow />
        <FirefoxWindow />
        <TaskbarRow />
      </Desktop>
    </>
  );
}
